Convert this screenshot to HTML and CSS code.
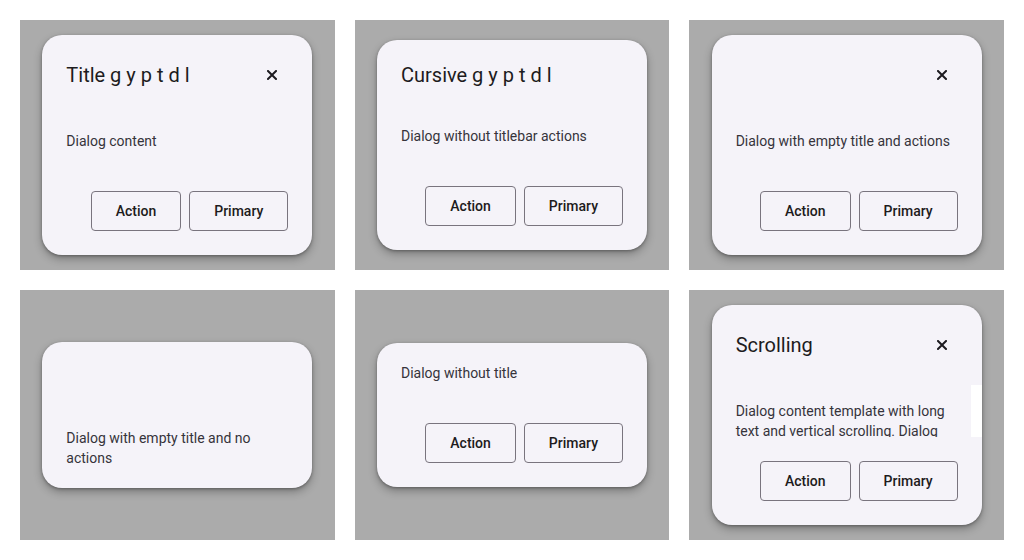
FILE: index.html
```html
<!DOCTYPE html>
<html>
<head>
<meta charset="utf-8">
<link rel="stylesheet" href="styles.css">
</head>
<body>
<div class="grid">
  <div class="panel">
    <div class="dialog">
      <div class="header">
        <div class="title">Title g y p t d l</div>
        <button class="close" aria-label="Close"><svg width="10" height="10" viewBox="0 0 10 10"><path d="M1 1L9 9M9 1L1 9" stroke="#1d1b20" stroke-width="2" stroke-linecap="square"/></svg></button>
      </div>
      <div class="content">Dialog content</div>
      <div class="actions"><button class="btn">Action</button><button class="btn">Primary</button></div>
    </div>
  </div>
  <div class="panel">
    <div class="dialog">
      <div class="header header-plain">
        <div class="title">Cursive g y p t d l</div>
      </div>
      <div class="content">Dialog without titlebar actions</div>
      <div class="actions"><button class="btn">Action</button><button class="btn">Primary</button></div>
    </div>
  </div>
  <div class="panel">
    <div class="dialog">
      <div class="header">
        <div class="title"></div>
        <button class="close" aria-label="Close"><svg width="10" height="10" viewBox="0 0 10 10"><path d="M1 1L9 9M9 1L1 9" stroke="#1d1b20" stroke-width="2" stroke-linecap="square"/></svg></button>
      </div>
      <div class="content">Dialog with empty title and actions</div>
      <div class="actions"><button class="btn">Action</button><button class="btn">Primary</button></div>
    </div>
  </div>
  <div class="panel">
    <div class="dialog">
      <div class="header header-plain">
        <div class="title"></div>
      </div>
      <div class="content">Dialog with empty title and no actions</div>
    </div>
  </div>
  <div class="panel">
    <div class="dialog">
      <div class="content content-top">Dialog without title</div>
      <div class="actions"><button class="btn">Action</button><button class="btn">Primary</button></div>
    </div>
  </div>
  <div class="panel">
    <div class="dialog">
      <div class="header">
        <div class="title">Scrolling</div>
        <button class="close" aria-label="Close"><svg width="10" height="10" viewBox="0 0 10 10"><path d="M1 1L9 9M9 1L1 9" stroke="#1d1b20" stroke-width="2" stroke-linecap="square"/></svg></button>
      </div>
      <div class="scroll-wrap">
        <div class="scroller">Dialog content template with long text and vertical scrolling. Dialog content template with long text and vertical scrolling.</div>
        <div class="scrollbar"></div>
      </div>
      <div class="actions"><button class="btn">Action</button><button class="btn">Primary</button></div>
    </div>
  </div>
</div>
</body>
</html>
```

FILE: styles.css
```css
html, body {
  margin: 0;
  padding: 0;
  background: #ffffff;
  font-family: Roboto, "Liberation Sans", sans-serif;
}
.grid {
  display: grid;
  grid-template-columns: repeat(3, 1fr);
  grid-template-rows: 250px 250px;
  gap: 20px;
  padding: 20px;
}
.panel {
  background: #ababab;
  display: flex;
  align-items: center;
  justify-content: center;
}
.dialog {
  width: 270px;
  background: #f5f3f9;
  border-radius: 20px;
  box-shadow: 0 4px 8px rgba(0,0,0,0.28), 0 1px 3px rgba(0,0,0,0.3);
  display: flex;
  flex-direction: column;
  overflow: hidden;
}
.header {
  display: flex;
  align-items: center;
  padding: 24px 24px 20px 24px;
  min-height: 32px;
}
.header-plain {
  min-height: 22px;
}
.title {
  flex: 1;
  font-size: 20px;
  line-height: 22px;
  min-height: 22px;
  color: #1d1b20;
  letter-spacing: 0;
  white-space: nowrap;
}
.close {
  width: 32px;
  height: 32px;
  border: none;
  background: transparent;
  padding: 0;
  display: flex;
  align-items: center;
  justify-content: center;
}
.content {
  padding: 20px 24px;
  font-size: 14px;
  line-height: 20px;
  color: #36333b;
}
.content-top {
  padding-top: 20px;
}
.scroll-wrap {
  display: flex;
  height: 52px;
  margin: 4px 0;
}
.scroller {
  flex: 1;
  padding: 16px 13px 0 24px;
  overflow: hidden;
  font-size: 14px;
  line-height: 20px;
  color: #36333b;
}
.scrollbar {
  width: 11px;
  background: #ffffff;
}
.actions {
  display: flex;
  justify-content: flex-end;
  gap: 8px;
  padding: 20px 24px 24px;
}
.btn {
  height: 40px;
  padding: 0 24px;
  border: 1px solid #79747e;
  border-radius: 4px;
  background: transparent;
  font-family: Roboto, "Liberation Sans", sans-serif;
  font-size: 14px;
  font-weight: 500;
  color: #1d1b20;
}
```
